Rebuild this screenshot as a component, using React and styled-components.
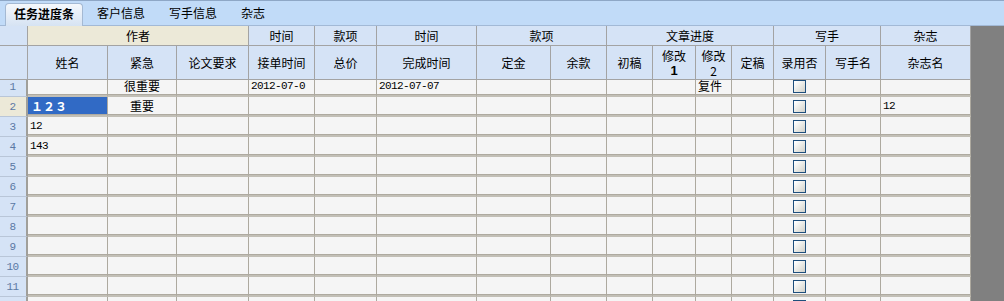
import React from 'react';
import styled, { createGlobalStyle, css } from 'styled-components';

const GlobalStyle = createGlobalStyle`
  html, body { margin: 0; padding: 0; }
  body {
    background: #808080;
    font-family: "Noto Sans CJK SC", "Noto Sans", sans-serif;
    font-size: 12px;
    color: #000;
  }
`;

const COLS = [28, 80, 69, 72, 66, 62, 100, 74, 56, 46, 43, 36, 42, 52, 55, 90];

const Page = styled.div`
  width: 1004px;
  height: 301px;
  overflow: hidden;
  display: flex;
  flex-direction: column;
  background: #808080;
`;

const TabBar = styled.div`
  flex: 0 0 26px;
  box-sizing: border-box;
  display: flex;
  align-items: flex-end;
  padding-left: 5px;
  background: #c1dbf8;
  border-top: 1px solid #8ea7c6;
  border-bottom: 1px solid #a2b9d6;
`;

const Tab = styled.div`
  height: 22px;
  box-sizing: border-box;
  display: flex;
  align-items: center;
  padding: 0 12px 3px;
  font-size: 12px;
  white-space: nowrap;
  ${(p) =>
    p.$active &&
    css`
      height: 23px;
      margin-bottom: -1px;
      margin-right: 2px;
      padding: 0 8px 3px;
      font-weight: bold;
      border: 1px solid #a4b9d3;
      border-bottom: none;
      border-radius: 4px 4px 0 0;
      background: linear-gradient(#f5f8fc, #d6e3f3);
    `}
`;

const Body = styled.div`
  flex: 1;
  display: flex;
  overflow: hidden;
`;

const Grid = styled.div`
  flex: 0 0 auto;
  display: grid;
  grid-template-columns: ${COLS.map((w) => `${w}px`).join(' ')};
  grid-template-rows: 20px 34px 17px;
  grid-auto-rows: 20px;
  align-self: flex-start;
  background: #f5f5f5;
`;

const HeadCell = styled.div`
  grid-column: span ${(p) => p.$span || 1};
  box-sizing: border-box;
  border-right: 1px solid #a3a3a3;
  border-bottom: 1px solid #a3a3a3;
  background: ${(p) => (p.$beige ? '#ece9d8' : '#d5e3f6')};
  display: flex;
  flex-direction: column;
  align-items: center;
  justify-content: center;
  text-align: center;
  line-height: 15px;
  white-space: nowrap;
  overflow: hidden;
`;

const RowHead = styled.div`
  box-sizing: border-box;
  border-right: 2px solid #a09f9a;
  border-bottom: 1px solid #b9c6d8;
  background: ${(p) => (p.$beige ? '#ece9d8' : '#d5e3f6')};
  color: #5a78a4;
  font-family: "Liberation Mono", "DejaVu Sans Mono", monospace;
  font-size: 11px;
  letter-spacing: -0.5px;
  display: flex;
  align-items: center;
  justify-content: center;
  padding-right: 1px;
  overflow: hidden;
  ${(p) => p.$clip && css`padding-bottom: 3px;`}
`;

const Cell = styled.div`
  box-sizing: border-box;
  border-right: 1px solid #ada99f;
  border-bottom: 2px solid #c2bfb6;
  border-top: 0;
  box-shadow: inset 0 -1px 0 #aeaaa0;
  display: flex;
  align-items: center;
  justify-content: ${(p) => (p.$center ? 'center' : 'flex-start')};
  padding-left: ${(p) => (p.$center ? '0' : '2px')};
  overflow: hidden;
  white-space: nowrap;
  ${(p) => p.$clip && css`padding-bottom: 3px;`}
  ${(p) =>
    p.$selected &&
    css`
      background: #316ac5;
      color: #fff;
      font-weight: bold;
      padding-left: 3px;
    `}
`;

const Text = styled.span`
  line-height: 16px;
  ${(p) =>
    p.$mono &&
    css`
      font-family: "Liberation Mono", "DejaVu Sans Mono", monospace;
      font-size: 11px;
      letter-spacing: -0.6px;
    `}
`;

const Check = styled.span`
  width: 13px;
  height: 13px;
  box-sizing: border-box;
  border: 1px solid #1f4f7c;
  background: linear-gradient(135deg, #ffffff 10%, #e9e9e4 55%, #d2d2cb 100%);
`;

const Bold = styled.span`
  font-weight: bold;
  font-family: "Liberation Sans", sans-serif;
  font-size: 13px;
`;

const groups = [
  { label: '', span: 1 },
  { label: '作者', span: 3, beige: true },
  { label: '时间', span: 1 },
  { label: '款项', span: 1 },
  { label: '时间', span: 1 },
  { label: '款项', span: 2 },
  { label: '文章进度', span: 4 },
  { label: '写手', span: 2 },
  { label: '杂志', span: 1 },
];

const heads = [
  '',
  '姓名',
  '紧急',
  '论文要求',
  '接单时间',
  '总价',
  '完成时间',
  '定金',
  '余款',
  '初稿',
  <>
    <span>修改</span>
    <Bold>1</Bold>
  </>,
  <>
    <span>修改</span>
    <span>2</span>
  </>,
  '定稿',
  '录用否',
  '写手名',
  '杂志名',
];

const CENTER_COLS = new Set([1, 12]);
const MONO = /^[0-9-]+$/;

const rows = [
  { n: 1, clip: true, cells: { 1: '很重要', 3: '2012-07-0', 5: '2012-07-07', 10: '复件' } },
  { n: 2, selected: 0, cells: { 0: '１２３', 1: '重要', 14: '12' } },
  { n: 3, cells: { 0: '12' } },
  { n: 4, cells: { 0: '143' } },
  ...Array.from({ length: 8 }, (_, i) => ({ n: i + 5, cells: {} })),
];

export default function App() {
  return (
    <>
      <GlobalStyle />
      <Page>
        <TabBar>
          <Tab $active>任务进度条</Tab>
          <Tab>客户信息</Tab>
          <Tab>写手信息</Tab>
          <Tab>杂志</Tab>
        </TabBar>
        <Body>
          <Grid>
            {groups.map((g, i) => (
              <HeadCell key={`g${i}`} $span={g.span} $beige={g.beige}>
                {g.label}
              </HeadCell>
            ))}
            {heads.map((h, i) => (
              <HeadCell key={`h${i}`}>{h}</HeadCell>
            ))}
            {rows.map((r) => (
              <React.Fragment key={r.n}>
                <RowHead $beige={r.selected === 0} $clip={r.clip}>
                  {r.n}
                </RowHead>
                {Array.from({ length: 15 }, (_, c) => {
                  const v = r.cells[c];
                  return (
                    <Cell
                      key={c}
                      $center={CENTER_COLS.has(c)}
                      $clip={r.clip}
                      $selected={r.selected === c}
                    >
                      {c === 12 ? (
                        <Check />
                      ) : v ? (
                        <Text $mono={MONO.test(v)}>{v}</Text>
                      ) : null}
                    </Cell>
                  );
                })}
              </React.Fragment>
            ))}
          </Grid>
        </Body>
      </Page>
    </>
  );
}
